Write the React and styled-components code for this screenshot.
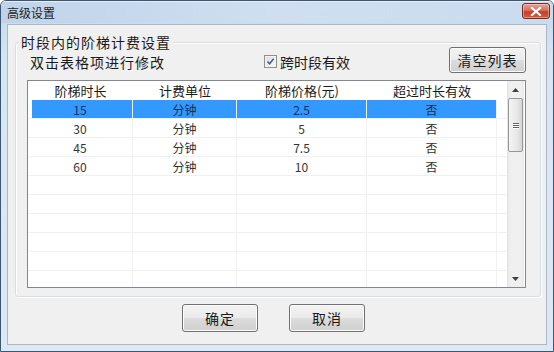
import React from "react";
import styled, { createGlobalStyle } from "styled-components";

const rows = [
  { len: "15", unit: "分钟", price: "2.5", over: "否" },
  { len: "30", unit: "分钟", price: "5", over: "否" },
  { len: "45", unit: "分钟", price: "7.5", over: "否" },
  { len: "60", unit: "分钟", price: "10", over: "否" },
  null,
  null,
  null,
  null,
  null,
  null,
];

const App = () => {
  return (
    <>
      <GlobalStyle />
      <Window>
        <TitleBar>
          <Title>高级设置</Title>
          <CloseBtn>
            <svg width="12" height="9" viewBox="0 0 12 9">
              <path d="M2 1 L10 8 M10 1 L2 8" stroke="#fff" strokeWidth="2.2" strokeLinecap="square" />
            </svg>
          </CloseBtn>
        </TitleBar>
        <Client>
          <GroupBox>
            <Legend>时段内的阶梯计费设置</Legend>
            <Toolbar>
              <Hint>双击表格项进行修改</Hint>
              <CheckLabel>
                <CheckBox>
                  <svg width="9" height="9" viewBox="0 0 9 9">
                    <path d="M1.5 4.5 L3.6 6.8 L7.6 1.8" stroke="#4a5f97" strokeWidth="1.6" fill="none" />
                  </svg>
                </CheckBox>
                跨时段有效
              </CheckLabel>
              <Button $w={77} $h={26}>清空列表</Button>
            </Toolbar>
            <Table>
              <TableBody>
                <HeaderRow>
                  <HeadCell>阶梯时长</HeadCell>
                  <HeadCell>计费单位</HeadCell>
                  <HeadCell>阶梯价格(元)</HeadCell>
                  <HeadCell>超过时长有效</HeadCell>
                  <HeadCell />
                </HeaderRow>
                {rows.map((r, i) => (
                  <Row key={i} $selected={i === 0}>
                    <Cell>{r ? r.len : ""}</Cell>
                    <Cell>{r ? r.unit : ""}</Cell>
                    <Cell>{r ? r.price : ""}</Cell>
                    <Cell>{r ? r.over : ""}</Cell>
                    <Filler />
                  </Row>
                ))}
              </TableBody>
              <ScrollBar>
                <ArrowBtn>
                  <svg width="7" height="4" viewBox="0 0 7 4">
                    <path d="M0 4 L3.5 0 L7 4 Z" fill="#404040" />
                  </svg>
                </ArrowBtn>
                <Thumb>
                  <Grip />
                  <Grip />
                  <Grip />
                </Thumb>
                <Track />
                <ArrowBtn>
                  <svg width="7" height="4" viewBox="0 0 7 4">
                    <path d="M0 0 L3.5 4 L7 0 Z" fill="#404040" />
                  </svg>
                </ArrowBtn>
              </ScrollBar>
            </Table>
          </GroupBox>
          <Footer>
            <Button $w={76} $h={28}>确定</Button>
            <Button $w={76} $h={28}>取消</Button>
          </Footer>
        </Client>
      </Window>
    </>
  );
};

const GlobalStyle = createGlobalStyle`
  html, body {
    margin: 0;
    padding: 0;
    background: #ffffff;
  }
  body {
    font-family: "Noto Sans CJK SC", "Noto Sans", sans-serif;
    color: #1a1a1a;
  }
`;

const Window = styled.div`
  width: 554px;
  height: 352px;
  box-sizing: border-box;
  border: 1px solid #3b5671;
  border-radius: 6px 6px 0 0;
  background: linear-gradient(#c4d7ec, #d8e5f3 60px, #dde8f4);
  display: flex;
  flex-direction: column;
  overflow: hidden;
`;

const TitleBar = styled.div`
  height: 22px;
  display: flex;
  align-items: center;
  justify-content: space-between;
  padding: 0 3px 0 6px;
  background: linear-gradient(to right, #bfd3ea, #cfdff1 50%, #c9dbef);
  box-shadow: inset 0 1px 0 #e6eef8;
`;

const Title = styled.div`
  font-size: 12px;
  line-height: 14px;
  color: #1e1e1e;
  margin-top: 1px;
`;

const CloseBtn = styled.div`
  width: 28px;
  height: 16px;
  box-sizing: border-box;
  margin-top: -2px;
  border: 1px solid #7a2b22;
  border-radius: 3px;
  background: linear-gradient(#e8a493, #d4725e 45%, #c4402a 55%, #d45a3c);
  box-shadow: inset 0 0 0 1px rgba(255, 255, 255, 0.35);
  display: flex;
  align-items: center;
  justify-content: center;
`;

const Client = styled.div`
  flex: 1;
  margin: 1px 6px 6px 6px;
  border: 1px solid #a8b8c9;
  background: #f0f0f0;
  display: flex;
  flex-direction: column;
`;

const GroupBox = styled.div`
  margin: 17px 5px 0 7px;
  border: 1px solid #d5dfe5;
  border-radius: 3px;
  box-shadow: inset 1px 1px 0 #ffffff, 1px 1px 0 #ffffff;
  padding: 0 14px 8px 11px;
  display: flex;
  flex-direction: column;
`;

const Legend = styled.div`
  align-self: flex-start;
  margin: -9px 0 0 -8px;
  padding: 0 2px;
  background: #f0f0f0;
  font-size: 14px;
  line-height: 16px;
  letter-spacing: 1px;
`;

const Toolbar = styled.div`
  height: 26px;
  margin-top: -3px;
  display: flex;
  align-items: center;
`;

const Hint = styled.div`
  width: 234px;
  padding-left: 3px;
  margin-top: 3px;
  font-size: 14px;
  letter-spacing: 1px;
`;

const CheckLabel = styled.div`
  display: flex;
  align-items: center;
  gap: 3px;
  font-size: 14px;
  margin-top: 3px;
`;

const CheckBox = styled.div`
  width: 13px;
  height: 13px;
  box-sizing: border-box;
  border: 1px solid #8e8f8f;
  background: linear-gradient(135deg, #dcdcdc, #fbfbfb);
  box-shadow: inset 0 0 0 1px #f4f4f4;
  display: flex;
  align-items: center;
  justify-content: center;
`;

const Button = styled.div`
  width: ${(p) => p.$w}px;
  height: ${(p) => p.$h}px;
  box-sizing: border-box;
  margin-left: auto;
  border: 1px solid #707070;
  border-radius: 3px;
  background: linear-gradient(#f2f2f2, #ebebeb 50%, #dddddd 50%, #cfcfcf);
  box-shadow: inset 0 0 0 1px #fcfcfc;
  display: flex;
  align-items: center;
  justify-content: center;
  font-size: 14px;
  letter-spacing: 1px;
`;

const Table = styled.div`
  margin-top: 7px;
  height: 208px;
  box-sizing: border-box;
  border: 1px solid #828790;
  background: #fff;
  display: flex;
  overflow: hidden;
`;

const TableBody = styled.div`
  flex: 1;
  display: flex;
  flex-direction: column;
`;

const cols = "105px 104px 130px 130px 1fr";

const HeaderRow = styled.div`
  display: grid;
  grid-template-columns: ${cols};
  height: 19px;
  flex-shrink: 0;
`;

const HeadCell = styled.div`
  font-size: 13px;
  line-height: 19px;
  text-align: center;
  color: #1a1a1a;
`;

const Row = styled.div`
  display: grid;
  grid-template-columns: ${cols};
  height: 19px;
  flex-shrink: 0;
  box-sizing: border-box;
  border-bottom: 1px solid #f0f0f0;
  background: ${(p) =>
    p.$selected
      ? "linear-gradient(to right, transparent 4px, #3399ff 4px, #3399ff 469px, transparent 469px)"
      : "transparent"};
  color: ${(p) => (p.$selected ? "#16305a" : "#333")};
`;

const Cell = styled.div`
  border-right: 1px solid #f0f0f0;
  font-size: 12px;
  line-height: 19px;
  text-align: center;
`;

const Filler = styled.div``;

const ScrollBar = styled.div`
  width: 17px;
  margin-right: 1px;
  display: flex;
  flex-direction: column;
  background: linear-gradient(to right, #e3e3e3, #f0f0f0 3px, #f0f0f0 14px, #e9e9e9);
`;

const ArrowBtn = styled.div`
  height: 17px;
  flex-shrink: 0;
  display: flex;
  align-items: center;
  justify-content: center;
`;

const Thumb = styled.div`
  height: 54px;
  margin: 0 1px;
  box-sizing: border-box;
  border: 1px solid #979797;
  border-radius: 2px;
  background: linear-gradient(to right, #f4f4f4, #e8e8e8 60%, #d6d6d6);
  display: flex;
  flex-direction: column;
  align-items: center;
  justify-content: center;
  gap: 1px;
`;

const Grip = styled.div`
  width: 6px;
  height: 1px;
  background: #5e5e5e;
  box-shadow: 0 1px 0 #ffffff;
`;

const Track = styled.div`
  flex: 1;
`;

const Footer = styled.div`
  display: flex;
  justify-content: center;
  gap: 31px;
  margin: 7px 0 0 -7px;

  & > div {
    margin-left: 0;
  }
`;

export default App;
